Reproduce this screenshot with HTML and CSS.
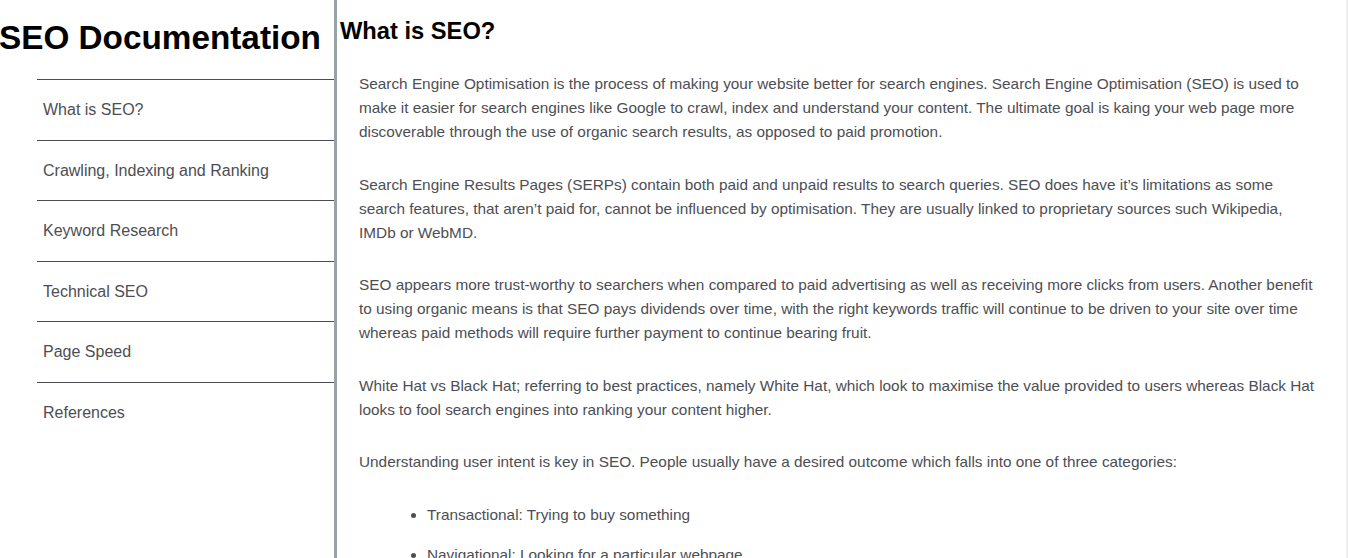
FILE: index.html
```html
<!DOCTYPE html>
<html lang="en">
<head>
<meta charset="utf-8">
<title>SEO Documentation</title>
<link rel="stylesheet" href="styles.css">
</head>
<body>
<div class="page">
  <nav class="navbar" id="navbar">
    <header class="nav-title">SEO Documentation</header>
    <ul class="nav-list">
      <li><a class="nav-link" href="#What_is_SEO?">What is SEO?</a></li>
      <li><a class="nav-link" href="#Crawling">Crawling, Indexing and Ranking</a></li>
      <li><a class="nav-link" href="#Keyword">Keyword Research</a></li>
      <li><a class="nav-link" href="#Technical">Technical SEO</a></li>
      <li><a class="nav-link" href="#Speed">Page Speed</a></li>
      <li><a class="nav-link" href="#References">References</a></li>
    </ul>
  </nav>
  <main class="main-doc" id="main-doc">
    <section class="main-section" id="What_is_SEO?">
      <header class="section-title">What is SEO?</header>
      <p>Search Engine Optimisation is the process of making your website better for search engines. Search Engine Optimisation (SEO) is used to make it easier for search engines like Google to crawl, index and understand your content. The ultimate goal is kaing your web page more discoverable through the use of organic search results, as opposed to paid promotion.</p>
      <p>Search Engine Results Pages (SERPs) contain both paid and unpaid results to search queries. SEO does have it’s limitations as some search features, that aren’t paid for, cannot be influenced by optimisation. They are usually linked to proprietary sources such Wikipedia, IMDb or WebMD.</p>
      <p>SEO appears more trust-worthy to searchers when compared to paid advertising as well as receiving more clicks from users. Another benefit to using organic means is that SEO pays dividends over time, with the right keywords traffic will continue to be driven to your site over time whereas paid methods will require further payment to continue bearing fruit.</p>
      <p>White Hat vs Black Hat; referring to best practices, namely White Hat, which look to maximise the value provided to users whereas Black Hat looks to fool search engines into ranking your content higher.</p>
      <p>Understanding user intent is key in SEO. People usually have a desired outcome which falls into one of three categories:</p>
      <ul class="intent-list">
        <li>Transactional: Trying to buy something</li>
        <li>Navigational: Looking for a particular webpage</li>
        <li>Informational: Looking for information</li>
      </ul>
    </section>
  </main>
</div>
</body>
</html>
```
FILE: styles.css
```css
html, body {
  margin: 0;
  padding: 0;
  height: 100%;
  overflow: hidden;
  background: #fff;
}

body {
  font-family: "Liberation Sans", Arial, sans-serif;
  color: #4d4e53;
}

.page {
  display: flex;
  height: 100%;
}

.navbar {
  flex: 0 0 334px;
  width: 334px;
  border-right: 3px solid #95a5a6;
  box-sizing: content-box;
}

.nav-title {
  font-size: 33.3px;
  font-weight: bold;
  color: #000;
  white-space: nowrap;
  margin-left: -1px;
  padding-top: 18px;
  line-height: 40px;
  height: 61px;
}

.nav-list {
  list-style: none;
  margin: 0 0 0 37px;
  padding: 0;
}

.nav-list li {
  border-top: 1px solid #4d4e53;
}

.nav-link {
  display: block;
  padding: 20px 0 20px 6px;
  line-height: 19.6px;
  font-size: 16px;
  color: #4d4e53;
  text-decoration: none;
}

.main-doc {
  flex: 1 1 auto;
  min-width: 0;
  padding-left: 3px;
  border-right: 2px solid #f0f0f0;
}

.section-title {
  font-size: 23.7px;
  font-weight: bold;
  color: #000;
  padding-top: 17px;
  line-height: 28px;
  margin-bottom: 27px;
}

.main-section p {
  margin: 0 28px 28.5px 19px;
  font-size: 15.35px;
  line-height: 24px;
}

.intent-list {
  margin: 0;
  padding: 0 0 0 87px;
  font-size: 15.35px;
  line-height: 24px;
}

.intent-list li {
  margin-bottom: 16px;
}
```
